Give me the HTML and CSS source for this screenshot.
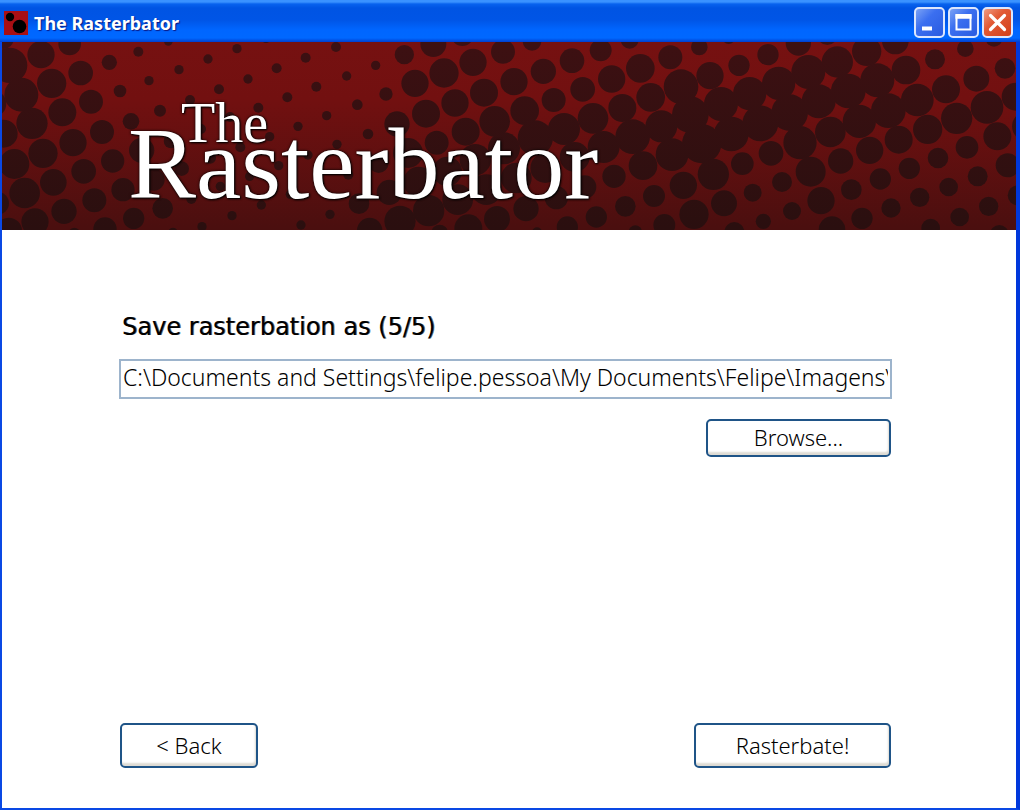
FILE: index.html
```html
<!DOCTYPE html>
<html lang="en">
<head>
<meta charset="utf-8">
<title>The Rasterbator</title>
<link rel="stylesheet" href="styles.css">
</head>
<body>
<div class="window">
  <header class="titlebar">
    <svg class="app-icon" viewBox="0 0 24 24" aria-hidden="true">
      <rect width="24" height="24" fill="#a80f14"/>
      <circle cx="6" cy="6" r="4.200" fill="#000"/>
      <circle cx="15.500" cy="15.500" r="6.800" fill="#000"/>
    </svg>
    <span class="title">The Rasterbator</span>
    <div class="controls">
      <button class="control" type="button" aria-label="Minimize">
        <svg viewBox="0 0 31 31"><path d="M8 21.500h10" stroke="#fff" stroke-width="4"/></svg>
      </button>
      <button class="control" type="button" aria-label="Maximize">
        <svg viewBox="0 0 31 31"><path d="M8.500 8h14v14.500h-14z" fill="none" stroke="#fff" stroke-width="2"/><path d="M7.500 9.500h16" stroke="#fff" stroke-width="4.500"/></svg>
      </button>
      <button class="control control-close" type="button" aria-label="Close">
        <svg viewBox="0 0 31 31"><path d="M8.500 8.500l14 14M22.500 8.500l-14 14" stroke="#fff" stroke-width="3.200" stroke-linecap="round"/></svg>
      </button>
    </div>
  </header>
  <div class="banner">
    <svg class="halftone" viewBox="5 127 3042 564" preserveAspectRatio="xMinYMin slice" aria-hidden="true">
      <defs>
        <linearGradient id="dots" gradientUnits="userSpaceOnUse" x1="0" y1="127" x2="0" y2="688">
          <stop offset="0" stop-color="#3d1012"/>
          <stop offset="1" stop-color="#2a0f0f"/>
        </linearGradient>
      </defs>
      <g fill="url(#dots)">
        <circle cx="28" cy="197" r="53"/><circle cx="122" cy="165" r="41"/><circle cx="208" cy="133" r="34"/><circle cx="10" cy="118" r="30"/>
        <circle cx="154" cy="251" r="44"/><circle cx="241" cy="220" r="37"/><circle cx="327" cy="188" r="23"/><circle cx="414" cy="156" r="15"/><circle cx="504" cy="125" r="13"/>
        <circle cx="-22" cy="312" r="40"/><circle cx="63" cy="285" r="51"/><circle cx="186" cy="338" r="42"/><circle cx="272" cy="306" r="36"/><circle cx="359" cy="274" r="19"/><circle cx="446" cy="243" r="14"/><circle cx="536" cy="210" r="14"/><circle cx="623" cy="178" r="14"/><circle cx="710" cy="147" r="14"/><circle cx="797" cy="118" r="12"/>
        <circle cx="95" cy="371" r="47"/><circle cx="218" cy="429" r="41"/><circle cx="305" cy="397" r="36"/><circle cx="392" cy="365" r="25"/><circle cx="479" cy="333" r="18"/><circle cx="569" cy="301" r="15"/><circle cx="656" cy="269" r="15"/><circle cx="743" cy="238" r="14"/><circle cx="829" cy="206" r="15"/><circle cx="916" cy="174" r="15"/><circle cx="1007" cy="142" r="15"/>
        <circle cx="10" cy="402" r="42"/><circle cx="128" cy="461" r="44"/><circle cx="250" cy="515" r="37"/><circle cx="337" cy="484" r="35"/><circle cx="424" cy="452" r="38"/><circle cx="512" cy="424" r="22"/><circle cx="602" cy="388" r="15"/><circle cx="689" cy="352" r="15"/><circle cx="774" cy="324" r="15"/><circle cx="861" cy="293" r="15"/><circle cx="948" cy="261" r="15"/>
        <circle cx="42" cy="493" r="45"/><circle cx="159" cy="548" r="40"/><circle cx="282" cy="602" r="36"/><circle cx="368" cy="570" r="35"/><circle cx="460" cy="540" r="33"/><circle cx="544" cy="507" r="22"/><circle cx="630" cy="475" r="17"/><circle cx="720" cy="443" r="15"/><circle cx="808" cy="411" r="14"/><circle cx="893" cy="380" r="14"/><circle cx="979" cy="348" r="14"/>
        <circle cx="73" cy="580" r="46"/><circle cx="191" cy="635" r="38"/><circle cx="314" cy="688" r="35"/><circle cx="400" cy="656" r="32"/><circle cx="487" cy="626" r="31"/><circle cx="573" cy="598" r="15"/><circle cx="660" cy="560" r="14"/><circle cx="748" cy="530" r="14"/><circle cx="835" cy="498" r="14"/><circle cx="923" cy="466" r="14"/><circle cx="1010" cy="434" r="14"/>
        <circle cx="-8" cy="611" r="34"/><circle cx="104" cy="667" r="41"/><circle cx="25" cy="694" r="40"/><circle cx="222" cy="702" r="18"/><circle cx="518" cy="698" r="14"/><circle cx="605" cy="681" r="14"/><circle cx="695" cy="648" r="14"/><circle cx="783" cy="616" r="14"/><circle cx="870" cy="584" r="14"/><circle cx="958" cy="550" r="14"/><circle cx="902" cy="676" r="14"/><circle cx="989" cy="644" r="14"/>
        <circle cx="1039" cy="229" r="14"/><circle cx="1126" cy="197" r="14"/><circle cx="1212" cy="165" r="29"/><circle cx="1299" cy="133" r="39"/><circle cx="1386" cy="105" r="34"/>
        <circle cx="1071" cy="315" r="16"/><circle cx="1157" cy="283" r="20"/><circle cx="1244" cy="251" r="41"/><circle cx="1331" cy="220" r="44"/><circle cx="1418" cy="188" r="41"/><circle cx="1508" cy="156" r="36"/><circle cx="1595" cy="125" r="28"/>
        <circle cx="1103" cy="403" r="16"/><circle cx="1190" cy="373" r="38"/><circle cx="1277" cy="342" r="42"/><circle cx="1364" cy="310" r="41"/><circle cx="1451" cy="279" r="42"/><circle cx="1541" cy="246" r="41"/><circle cx="1629" cy="215" r="38"/><circle cx="1715" cy="183" r="37"/><circle cx="1801" cy="152" r="33"/><circle cx="1888" cy="120" r="27"/>
        <circle cx="1044" cy="525" r="15"/><circle cx="1135" cy="490" r="30"/><circle cx="1223" cy="460" r="45"/><circle cx="1309" cy="429" r="36"/><circle cx="1396" cy="396" r="42"/><circle cx="1483" cy="365" r="46"/><circle cx="1573" cy="333" r="43"/><circle cx="1660" cy="301" r="36"/><circle cx="1747" cy="269" r="37"/><circle cx="1834" cy="238" r="41"/><circle cx="1920" cy="206" r="43"/><circle cx="2010" cy="173" r="36"/>
        <circle cx="1076" cy="612" r="31"/><circle cx="1167" cy="578" r="38"/><circle cx="1255" cy="547" r="46"/><circle cx="1341" cy="515" r="44"/><circle cx="1425" cy="480" r="47"/><circle cx="1511" cy="446" r="48"/><circle cx="1605" cy="415" r="53"/><circle cx="1691" cy="388" r="48"/><circle cx="1778" cy="356" r="46"/><circle cx="1866" cy="325" r="42"/><circle cx="1951" cy="293" r="43"/><circle cx="2042" cy="261" r="52"/>
        <circle cx="1108" cy="692" r="38"/><circle cx="1199" cy="665" r="47"/><circle cx="1285" cy="633" r="47"/><circle cx="1372" cy="600" r="46"/><circle cx="1458" cy="570" r="46"/><circle cx="1548" cy="535" r="46"/><circle cx="1635" cy="505" r="45"/><circle cx="1723" cy="472" r="45"/><circle cx="1810" cy="442" r="48"/><circle cx="1897" cy="411" r="52"/><circle cx="1983" cy="380" r="48"/><circle cx="2070" cy="345" r="55"/>
        <circle cx="1318" cy="700" r="25"/><circle cx="1404" cy="686" r="42"/><circle cx="1490" cy="658" r="39"/><circle cx="1577" cy="627" r="38"/><circle cx="1668" cy="594" r="35"/><circle cx="1753" cy="562" r="35"/><circle cx="1841" cy="530" r="35"/><circle cx="1928" cy="498" r="43"/><circle cx="2015" cy="465" r="49"/>
        <circle cx="1610" cy="698" r="15"/><circle cx="1701" cy="682" r="32"/><circle cx="1788" cy="652" r="32"/><circle cx="1875" cy="620" r="31"/><circle cx="1961" cy="589" r="33"/><circle cx="1905" cy="697" r="20"/><circle cx="1992" cy="676" r="33"/>
        <circle cx="2097" cy="142" r="25"/><circle cx="2185" cy="113" r="20"/><circle cx="2129" cy="228" r="41"/><circle cx="2216" cy="197" r="32"/><circle cx="2303" cy="165" r="32"/><circle cx="2394" cy="130" r="38"/><circle cx="2481" cy="105" r="31"/>
        <circle cx="2162" cy="313" r="51"/><circle cx="2248" cy="282" r="50"/><circle cx="2335" cy="251" r="50"/><circle cx="2424" cy="217" r="51"/><circle cx="2511" cy="187" r="47"/><circle cx="2599" cy="155" r="44"/><circle cx="2685" cy="124" r="40"/>
        <circle cx="2104" cy="432" r="59"/><circle cx="2193" cy="403" r="52"/><circle cx="2280" cy="371" r="54"/><circle cx="2368" cy="339" r="55"/><circle cx="2455" cy="305" r="51"/><circle cx="2544" cy="274" r="52"/><circle cx="2631" cy="242" r="51"/><circle cx="2717" cy="211" r="43"/><circle cx="2804" cy="179" r="30"/><circle cx="2895" cy="147" r="25"/><circle cx="2981" cy="116" r="25"/>
        <circle cx="2049" cy="557" r="41"/><circle cx="2139" cy="524" r="47"/><circle cx="2226" cy="492" r="34"/><circle cx="2312" cy="461" r="37"/><circle cx="2399" cy="429" r="50"/><circle cx="2490" cy="397" r="46"/><circle cx="2577" cy="365" r="50"/><circle cx="2664" cy="333" r="52"/><circle cx="2751" cy="301" r="49"/><circle cx="2837" cy="269" r="42"/><circle cx="2928" cy="237" r="39"/><circle cx="3014" cy="206" r="31"/>
        <circle cx="2081" cy="644" r="44"/><circle cx="2171" cy="611" r="39"/><circle cx="2257" cy="579" r="27"/><circle cx="2345" cy="547" r="30"/><circle cx="2431" cy="516" r="45"/><circle cx="2521" cy="484" r="38"/><circle cx="2608" cy="452" r="41"/><circle cx="2695" cy="420" r="42"/><circle cx="2782" cy="389" r="44"/><circle cx="2869" cy="356" r="47"/><circle cx="2960" cy="323" r="49"/><circle cx="3046" cy="291" r="42"/>
        <circle cx="2202" cy="697" r="30"/><circle cx="2289" cy="665" r="23"/><circle cx="2375" cy="634" r="27"/><circle cx="2462" cy="603" r="41"/><circle cx="2553" cy="570" r="31"/><circle cx="2640" cy="538" r="32"/><circle cx="2727" cy="506" r="32"/><circle cx="2813" cy="475" r="31"/><circle cx="2900" cy="443" r="34"/><circle cx="2991" cy="410" r="42"/><circle cx="3079" cy="380" r="44"/>
        <circle cx="2495" cy="690" r="40"/><circle cx="2585" cy="656" r="32"/><circle cx="2672" cy="625" r="29"/><circle cx="2758" cy="593" r="29"/><circle cx="2845" cy="562" r="28"/><circle cx="2932" cy="530" r="30"/><circle cx="3022" cy="497" r="36"/>
        <circle cx="2791" cy="685" r="28"/><circle cx="2878" cy="652" r="28"/><circle cx="2965" cy="620" r="29"/><circle cx="3052" cy="587" r="30"/><circle cx="2997" cy="704" r="28"/>
      </g>
    </svg>
    <h1 class="logo"><span class="logo-small">The</span><span class="logo-large">Rasterbator</span></h1>
  </div>
  <main class="content">
    <form class="save-form">
      <label class="heading" for="path">Save rasterbation as (5/5)</label>
      <input class="path" id="path" type="text" value="C:\Documents and Settings\felipe.pessoa\My Documents\Felipe\Imagens\Screenshot.pdf">
      <button class="button browse" type="button">Browse...</button>
      <div class="actions">
        <button class="button back" type="button">&lt; Back</button>
        <button class="button rasterbate" type="button">Rasterbate!</button>
      </div>
    </form>
  </main>
</div>
</body>
</html>
```

FILE: styles.css
```css
* {
  box-sizing: border-box;
}

body {
  margin: 0;
  background: #fff;
  color: #000;
  font-family: "Noto Sans", sans-serif;
}

.window {
  display: flex;
  flex-direction: column;
  min-height: 100vh;
  border: 2px solid #0a48e4;
  border-top: 0;
  border-right: 4px solid #0038dc;
}

.titlebar {
  display: flex;
  align-items: center;
  height: 42px;
  margin: 0 -4px 0 -2px;
  padding: 3px 7px 0 4px;
  background: linear-gradient(#3a92ff 0, #3a92ff 2px, #0862ee 4px, #0054e3 8px, #0055e6 20px, #0066ff 30px, #0068ff 38px, #003fd0 42px);
}

.app-icon {
  width: 24px;
  height: 24px;
}

.title {
  margin-left: 6px;
  color: #fff;
  font-size: 18px;
  font-weight: 700;
  line-height: 24px;
  text-shadow: 1px 1px 1px #0a1883;
}

.controls {
  display: flex;
  gap: 3px;
  margin-left: auto;
}

.control {
  width: 31px;
  height: 31px;
  padding: 0;
  border: 2px solid #dce6fd;
  border-radius: 5px;
  background: linear-gradient(135deg, #7ba2f5, #3b6ff0 40%, #2a5be0);
}

.control svg {
  display: block;
  width: 31px;
  height: 31px;
  margin: -2px;
}

.control-close {
  background: linear-gradient(135deg, #f09a80, #e25a35 40%, #d2401a);
}

.banner {
  position: relative;
  height: 188px;
  overflow: hidden;
  background: linear-gradient(#761111 0, #721010 30%, #4a0f0f);
}

.halftone {
  position: absolute;
  inset: 0;
  width: 100%;
  height: 100%;
}

.logo {
  position: relative;
  margin: 0;
  padding: 53px 0 0 126px;
  color: #fff;
  font-family: "Liberation Serif", serif;
  font-weight: 400;
  text-shadow: 0 0 3px #000, 1px 1px 2px #000;
}

.logo span {
  display: block;
}

.logo-small {
  padding-left: 53px;
  font-size: 56px;
  line-height: 56px;
}

.logo-large {
  font-size: 102px;
  line-height: 26px;
}

.content {
  display: flex;
  flex: 1;
  padding: 80px 124px 40px 117px;
}

.save-form {
  display: flex;
  flex: 1;
  flex-direction: column;
}

.heading {
  padding-left: 3px;
  font-family: "DejaVu Sans", sans-serif;
  font-size: 24px;
  line-height: 34px;
  text-shadow: 1px 0 0 rgba(0, 0, 0, 0.6);
}

.path {
  width: 100%;
  height: 40px;
  margin-top: 15px;
  padding: 0 2px 4px;
  border: 2px solid #9db4cc;
  background: #fff;
  color: #000;
  font: 300 23px "Noto Sans", sans-serif;
}

.button {
  padding: 0 0 2px;
  border: 2px solid #1f5487;
  border-radius: 5px;
  background: #fff;
  box-shadow: inset -1px -3px 2px #dedbd3;
  color: #000;
  font: 300 22px "Noto Sans", sans-serif;
}

.browse {
  align-self: flex-end;
  width: 185px;
  height: 38px;
  margin: 20px 1px 0 0;
}

.actions {
  display: flex;
  justify-content: space-between;
  margin-top: auto;
  padding: 0 1px;
}

.back {
  width: 138px;
  height: 45px;
}

.rasterbate {
  width: 197px;
  height: 45px;
}
```
